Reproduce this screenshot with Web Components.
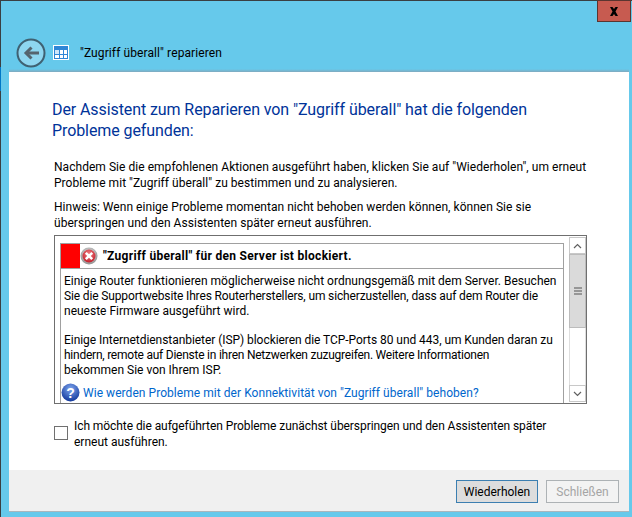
<!DOCTYPE html>
<html lang="de">
<head>
<meta charset="utf-8">
<style>
  html, body { margin: 0; height: 100%; background: #66c9eb; }
  body { font: 12px Roboto, "Noto Sans", sans-serif; color: #000; overflow: hidden; }
</style>
</head>
<body>
<wizard-window>
  <wizard-header slot="header">"Zugriff überall" reparieren</wizard-header>
  <wizard-body>
    <h-line>Der Assistent zum Reparieren von "Zugriff überall" hat die folgenden Probleme gefunden:</h-line>
    <p-text top="18">Nachdem Sie die empfohlenen Aktionen ausgeführt haben, klicken Sie auf "Wiederholen", um erneut<br>Probleme mit "Zugriff überall" zu bestimmen und zu analysieren.</p-text>
    <p-text top="8">Hinweis: Wenn einige Probleme momentan nicht behoben werden können, können Sie sie<br>überspringen und den Assistenten später erneut ausführen.</p-text>
    <problem-box>
      <span slot="title">"Zugriff überall" für den Server ist blockiert.</span>
      <div>Einige Router funktionieren möglicherweise nicht ordnungsgemäß mit dem Server. Besuchen<br><span style="letter-spacing:-.14px">Sie die Supportwebsite Ihres Routerherstellers, um sicherzustellen, dass auf dem Router die</span><br>neueste Firmware ausgeführt wird.</div>
      <div style="margin-top:14px"><span style="letter-spacing:-.055px">Einige Internetdienstanbieter (ISP) blockieren die TCP-Ports 80 und 443, um Kunden daran zu</span><br><span style="letter-spacing:-.24px">hindern, remote auf Dienste in ihren Netzwerken zuzugreifen. Weitere Informationen</span><br>bekommen Sie von Ihrem ISP.</div>
      <span slot="link">Wie werden Probleme mit der Konnektivität von "Zugriff überall" behoben?</span>
    </problem-box>
    <skip-check><span style="letter-spacing:-.07px">Ich möchte die aufgeführten Probleme zunächst überspringen und den Assistenten später</span><br>erneut ausführen.</skip-check>
  </wizard-body>
  <wizard-footer>
    <wiz-button default>Wiederholen</wiz-button>
    <wiz-button disabled>Schließen</wiz-button>
  </wizard-footer>
</wizard-window>

<script>
class WizardWindow extends HTMLElement {
  constructor() {
    super();
    this.attachShadow({ mode: 'open' });
    this.shadowRoot.innerHTML = `
      <style>
        :host {
          display: block;
          position: relative;
          width: 632px;
          height: 517px;
          box-sizing: border-box;
          border-top: 1px solid #3a3f42;
          border-left: 1px solid #3a3f42;
          padding-left: 8px;
        }
        .accent {
          position: absolute;
          left: -1px;
          top: 66px;
          width: 1px;
          height: 24px;
          background: #0078c8;
        }
        .close {
          position: absolute;
          top: -1px;
          right: 1px;
          width: 34px;
          height: 22px;
          box-sizing: border-box;
          background: #c75b50;
          border: 1px solid #5a3530;
          display: flex;
          align-items: center;
          justify-content: center;
        }
        .panel { width: 620px; }
      </style>
      <div class="accent"></div>
      <div class="close">
        <svg width="10" height="9" viewBox="0 0 10 9"><path d="M1 0h2.500L5 2 6.500 0H9L6.500 4.500 9 9H6.500L5 7 3.500 9H1L3.500 4.500z" fill="#000"/></svg>
      </div>
      <div class="panel">
        <slot name="header"></slot>
        <slot></slot>
      </div>
    `;
  }
}

class WizardHeader extends HTMLElement {
  constructor() {
    super();
    this.attachShadow({ mode: 'open' });
    this.shadowRoot.innerHTML = `
      <style>
        :host {
          display: flex;
          align-items: center;
          height: 71px;
          box-sizing: border-box;
          padding: 36px 0 4px 7px;
          letter-spacing: 0.1px;
        }
        .back { display: block; }
        .grid { display: block; margin-left: 7px; margin-right: 11px; }
        .shade {
          position: absolute;
          left: 8px;
          top: 68px;
          width: 620px;
          height: 3px;
          background: linear-gradient(#66c9eb, #82a9bd);
        }
      </style>
      <svg class="back" width="30" height="30" viewBox="0 0 30 30">
        <circle cx="15" cy="15" r="13.500" fill="#8ed6f0" stroke="#3f6172" stroke-width="2"/>
        <path d="M23 15H11" stroke="#55646e" stroke-width="3" fill="none"/>
        <path d="M15.500 9.500L10 15l5.500 5.500" stroke="#55646e" stroke-width="3" fill="none"/>
      </svg>
      <svg class="grid" width="16" height="15" viewBox="0 0 16 15">
        <rect width="16" height="15" fill="#fff"/>
        <rect x="1" y="1" width="14" height="13" fill="#2f86d6"/>
        <rect x="2" y="5" width="4" height="4" fill="#cfe6f8"/>
        <rect x="7" y="5" width="3" height="4" fill="#fff"/>
        <rect x="11" y="5" width="3" height="4" fill="#fff"/>
        <rect x="2" y="10" width="4" height="3" fill="#fff"/>
        <rect x="7" y="10" width="3" height="3" fill="#fff"/>
        <rect x="11" y="10" width="3" height="3" fill="#fff"/>
      </svg>
      <slot></slot>
      <div class="shade"></div>
    `;
  }
}

class WizardBody extends HTMLElement {
  constructor() {
    super();
    this.attachShadow({ mode: 'open' });
    this.shadowRoot.innerHTML = `
      <style>
        :host {
          display: block;
          height: 398px;
          box-sizing: border-box;
          background: #fff;
          padding: 27px 0 0 45px;
        }
      </style>
      <slot></slot>
    `;
  }
}

class HLine extends HTMLElement {
  constructor() {
    super();
    this.attachShadow({ mode: 'open' });
    this.shadowRoot.innerHTML = `
      <style>
        :host {
          display: block;
          width: 500px;
          margin-left: -2px;
          font-size: 16px;
          line-height: 21px;
          color: #003399;
          letter-spacing: -0.09px;
        }
      </style>
      <slot></slot>
    `;
  }
}

class PText extends HTMLElement {
  constructor() {
    super();
    this.attachShadow({ mode: 'open' });
    this.shadowRoot.innerHTML = `
      <style>
        :host {
          display: block;
          line-height: 16px;
          letter-spacing: 0.04px;
          white-space: nowrap;
        }
      </style>
      <slot></slot>
    `;
  }
  connectedCallback() {
    this.style.marginTop = (this.getAttribute('top') || 0) + 'px';
  }
}

class ProblemBox extends HTMLElement {
  constructor() {
    super();
    this.attachShadow({ mode: 'open' });
    this.shadowRoot.innerHTML = `
      <style>
        :host {
          display: flex;
          width: 533px;
          height: 169px;
          margin-top: 4px;
          box-sizing: border-box;
          border: 1px solid #6f6f6f;
          background: #fff;
        }
        .content { flex: 1; padding: 7px 0 0 5px; min-width: 0; }
        .card { border: 1px solid #a0a0a0; border-bottom: 0; width: 504px; box-sizing: border-box; height: 160px; }
        .title {
          display: flex;
          align-items: center;
          height: 25px;
          box-sizing: border-box;
          border-bottom: 1px solid #a0a0a0;
          font-weight: 700;
          letter-spacing: 0.3px;
        }
        .flag { width: 19px; height: 100%; background: #ff0000; }
        .err { margin-right: 5px; display: block; }
        .text { padding: 5px 3px 0 3px; line-height: 15px; height: 114px; box-sizing: border-box; white-space: nowrap; }
        .link { display: flex; align-items: center; color: #0066cc; white-space: nowrap; letter-spacing: 0.05px; }
        .link svg { display: block; margin-right: 3px; }
        .bar { width: 17px; display: flex; flex-direction: column; margin-right: 0; }
        .btn { height: 17px; box-sizing: border-box; border: 1px solid #c8c8c8; display: flex; align-items: center; justify-content: center; margin-top: 1px; }
        .btn:last-child { margin-top: 0; margin-bottom: 1px; }
        .thumb { height: 74px; box-sizing: border-box; background: #dadada; border: 1px solid #bcbcbc; display: flex; align-items: center; justify-content: center; }
        .track { flex: 1; border-left: 1px solid #dedede; border-right: 1px solid #dedede; }
      </style>
      <div class="content">
        <div class="card">
          <div class="title">
            <div class="flag"></div>
            <svg class="err" width="18" height="18" viewBox="0 0 18 18">
              <defs>
                <radialGradient id="rim" cx="50%" cy="40%" r="60%"><stop offset="0" stop-color="#f3f3f3"/><stop offset="1" stop-color="#8f8f8f"/></radialGradient>
                <radialGradient id="red" cx="50%" cy="35%" r="65%"><stop offset="0" stop-color="#ef7f83"/><stop offset="1" stop-color="#c4202c"/></radialGradient>
              </defs>
              <circle cx="9" cy="9" r="8.500" fill="url(#rim)"/>
              <circle cx="9" cy="9" r="6.500" fill="url(#red)"/>
              <path d="M5.800 5.800l6.400 6.400M12.200 5.800l-6.400 6.400" stroke="#fff" stroke-width="2.500"/>
            </svg>
            <slot name="title"></slot>
          </div>
          <div class="text"><slot></slot></div>
          <div class="link">
            <svg width="19" height="19" viewBox="0 0 19 19">
              <defs><radialGradient id="q" cx="50%" cy="30%" r="70%"><stop offset="0" stop-color="#7fa6ee"/><stop offset="1" stop-color="#12389c"/></radialGradient></defs>
              <circle cx="9.500" cy="9.500" r="9" fill="url(#q)"/>
              <text x="9.500" y="14.500" text-anchor="middle" font-family="Liberation Sans" font-weight="700" font-size="14" fill="#fff">?</text>
            </svg>
            <slot name="link"></slot>
          </div>
        </div>
      </div>
      <div class="bar">
        <div class="btn"><svg width="9" height="6" viewBox="0 0 9 6"><path d="M1 5l3.500-3.500L8 5" fill="none" stroke="#606060" stroke-width="1.200"/></svg></div>
        <div class="thumb"><svg width="8" height="8" viewBox="0 0 8 8"><path d="M0 1h8M0 4h8M0 7h8" stroke="#808080" stroke-width="1.500"/></svg></div>
        <div class="track"></div>
        <div class="btn"><svg width="9" height="6" viewBox="0 0 9 6"><path d="M1 1l3.500 3.500L8 1" fill="none" stroke="#606060" stroke-width="1.200"/></svg></div>
      </div>
    `;
  }
}

class SkipCheck extends HTMLElement {
  constructor() {
    super();
    this.attachShadow({ mode: 'open' });
    this.shadowRoot.innerHTML = `
      <style>
        :host {
          display: flex;
          align-items: center;
          margin-top: 14px;
          line-height: 16px;
          white-space: nowrap;
        }
        .box { width: 12px; height: 12px; border: 1px solid #707070; background: #fff; margin: 0 6px 2px 0; flex: none; }
      </style>
      <div class="box"></div>
      <div><slot></slot></div>
    `;
  }
}

class WizardFooter extends HTMLElement {
  constructor() {
    super();
    this.attachShadow({ mode: 'open' });
    this.shadowRoot.innerHTML = `
      <style>
        :host {
          display: flex;
          justify-content: flex-end;
          gap: 8px;
          height: 42px;
          box-sizing: border-box;
          padding: 10px 10px 0 0;
          background: #f0f0f0;
          border-bottom: 1px solid #a9b6bc;
        }
      </style>
      <slot></slot>
    `;
  }
}

class WizButton extends HTMLElement {
  constructor() {
    super();
    this.attachShadow({ mode: 'open' });
    this.shadowRoot.innerHTML = `
      <style>
        :host {
          display: flex;
          align-items: center;
          justify-content: center;
          width: 73px;
          height: 23px;
          box-sizing: border-box;
          border: 1px solid #acacac;
          background: #e3e3e3;
        }
        :host([default]) { width: 82px; border-color: #3c7fb1; background: #dddddd; }
        :host([disabled]) { background: #f3f3f3; border-color: #adb2b5; color: #a5a5a5; }
      </style>
      <slot></slot>
    `;
  }
}

customElements.define('wizard-window', WizardWindow);
customElements.define('wizard-header', WizardHeader);
customElements.define('h-line', HLine);
customElements.define('wizard-body', WizardBody);
customElements.define('p-text', PText);
customElements.define('problem-box', ProblemBox);
customElements.define('skip-check', SkipCheck);
customElements.define('wizard-footer', WizardFooter);
customElements.define('wiz-button', WizButton);
</script>
</body>
</html>
